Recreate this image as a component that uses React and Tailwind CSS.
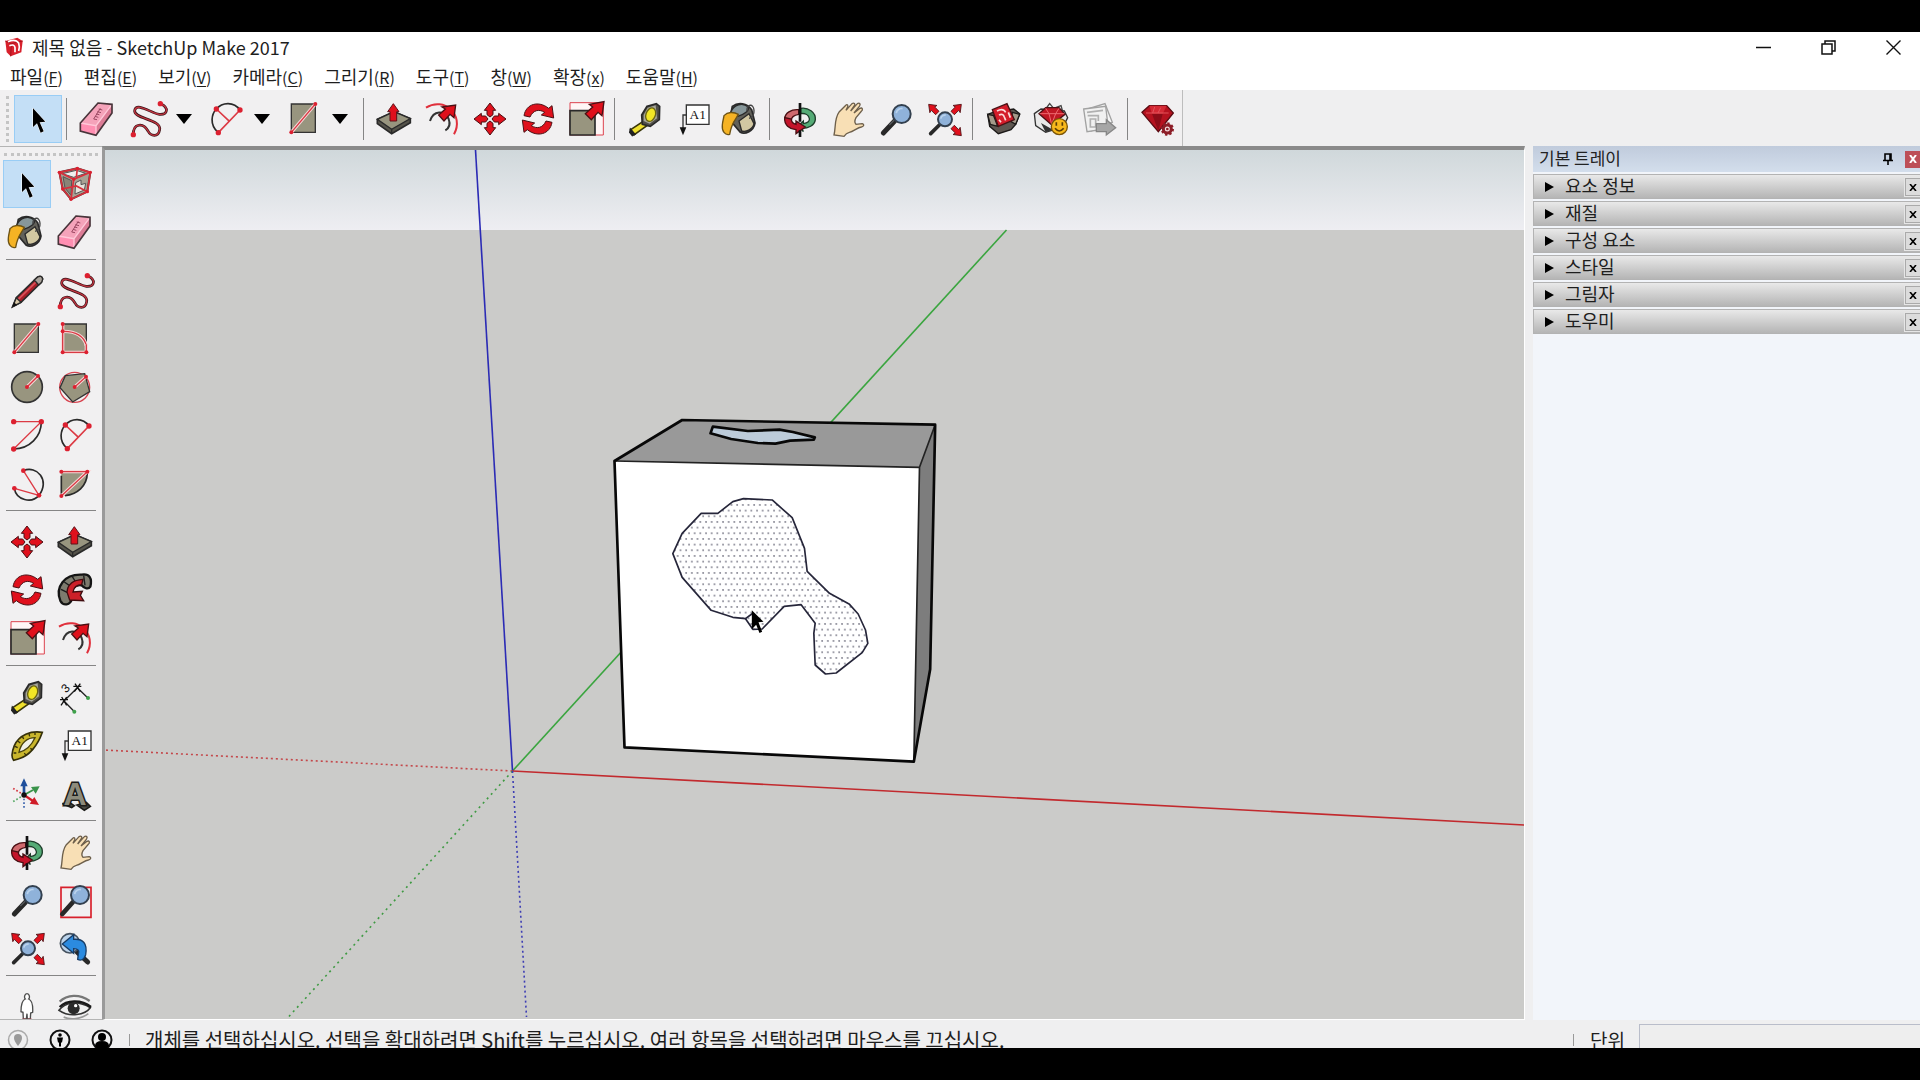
import React, { useState } from "react";

const RED = "#e0101c";
const DARK = "#2a2a2a";
const TAUPE = "#98957f";

// Red end point used by all of the drawing tools
const Dot = ({ x, y, r = 7 }) => <circle cx={x} cy={y} r={r} fill="#dc2030" />;

const RedLine = ({ d }) => (
  <>
    <path d={d} fill="none" stroke="#f8dada" strokeWidth="10" />
    <path d={d} fill="none" stroke="#d83a44" strokeWidth="4" />
  </>
);

const Lens = ({ x, y, r }) => (
  <>
    <circle cx={x} cy={y} r={r} fill="#8fb2da" stroke="#33404f" strokeWidth="6" />
    <path
      d={`M${x - r * 0.6} ${y - r * 0.1}a${r * 0.6} ${r * 0.6} 0 0 1 ${r * 0.7} ${-r * 0.5}`}
      fill="none"
      stroke="#b9d2ec"
      strokeWidth="5"
    />
  </>
);

const Arrow = ({ x, y, angle, s = 1 }) => (
  <path
    d="M0 0L19 25L9 23V46H-9V23L-19 25Z"
    transform={`translate(${x} ${y}) rotate(${angle}) scale(${s})`}
    fill={RED}
    stroke="#4a1014"
    strokeWidth="3"
  />
);

// All icons are drawn on a 120 x 120 grid
const icons = {
  select: (
    <path
      d="M45 28V84L57 73L68 101L77 97L65 70L82 68Z"
      fill="#000"
      stroke="#fff"
      strokeWidth="3"
      paintOrder="stroke"
    />
  ),
  component: (
    <>
      <path d="M13 25L67 13L106 25L97 83L48 106L23 75Z" fill="#a9a294" stroke="#4b3434" strokeWidth="6" />
      <path d="M22 29L64 19L92 28L56 40Z" fill="#efefef" stroke="#555" strokeWidth="3" />
      <path d="M24 38L50 50L48 94L30 72Z" fill="#8a8477" stroke="#555" strokeWidth="3" />
      <path d="M62 56L78 48V62L92 58L88 78L60 90Z" fill="#e8e4dc" stroke="#555" strokeWidth="3" />
      <path
        d="M13 25L67 13L106 25L97 83L48 106L23 75ZM13 25L56 46L106 25M56 46L48 106M67 13L64 40M23 75L64 66L97 83"
        fill="none"
        stroke="#d7303c"
        strokeWidth="5"
      />
      {[[13, 25], [67, 13], [106, 25], [97, 83], [48, 106], [23, 75], [56, 46]].map(([x, y]) => (
        <Dot key={`${x}-${y}`} x={x} y={y} r={5} />
      ))}
    </>
  ),
  paint: (
    <>
      <path d="M34 22C52 8 78 12 92 32L102 72C98 96 72 108 58 100L26 62Z" fill="#62615a" stroke={DARK} strokeWidth="5" />
      <path d="M54 66L84 44L99 74C96 90 76 100 62 96Z" fill="#d2c8a2" stroke={DARK} strokeWidth="4" />
      <path d="M28 42C38 14 66 10 82 24C86 34 70 46 50 52Z" fill="#87979a" stroke={DARK} strokeWidth="4" />
      <path d="M78 38C76 14 98 12 99 34C100 50 92 56 84 58" fill="none" stroke="#444" strokeWidth="4" />
      <path d="M9 50C20 38 38 38 52 46C46 60 32 68 26 106C12 110 2 96 4 78C5 66 8 58 9 50Z" fill="#f5b324" stroke="#6d5315" strokeWidth="4" />
    </>
  ),
  eraser: (
    <>
      <path d="M63 12L105 16L57 80L10 72Z" fill="#f5a3ba" />
      <path d="M105 16V42L57 109V80Z" fill="#dc7c96" />
      <path d="M10 72L57 80V109L10 96Z" fill="#ff8fb2" />
      <path d="M10 72L57 80L105 16M57 80V109" fill="none" stroke="#ffc8d8" strokeWidth="4" />
      <path d="M63 12L105 16V42L57 109L10 96V72Z" fill="none" stroke="#48343a" strokeWidth="5" />
      <path d="M50 60l10 2m-6-10l10 3m-7-10l10 2m-6-9l11 3m-7-11l11 3M50 60L70 28" fill="none" stroke="#9c4963" strokeWidth="3" />
    </>
  ),
  pencil: (
    <>
      <path d="M17 107L28 80L92 18Q104 12 107 24L103 34L42 94Z" fill="#a81f28" stroke={DARK} strokeWidth="5" />
      <path d="M33 86L92 28" stroke="#d9525a" strokeWidth="5" />
      <path d="M17 107L28 80L42 94Z" fill="#d8c8a8" stroke={DARK} strokeWidth="4" />
      <path d="M82 27L92 18Q104 12 107 24L104 34L95 42Z" fill="#a9a29a" stroke={DARK} strokeWidth="4" />
      <path d="M16 108l5-14 9 8z" fill="#111" />
    </>
  ),
  freehand: (
    <>
      <path
        d="M98 14C124 26 119 48 94 46C72 44 26 8 20 34C15 60 101 60 95 92C91 116 68 112 60 96C46 70 15 72 16 107"
        fill="none"
        stroke="#3b1519"
        strokeWidth="8"
      />
      <path
        d="M98 14C124 26 119 48 94 46C72 44 26 8 20 34C15 60 101 60 95 92C91 116 68 112 60 96C46 70 15 72 16 107"
        fill="none"
        stroke="#c03440"
        strokeWidth="4"
      />
      <Dot x={97} y={14} r={8} />
      <Dot x={16} y={107} r={8} />
    </>
  ),
  rectangle: (
    <>
      <path d="M22 15H94V100H22Z" fill={TAUPE} stroke="#333" strokeWidth="4" />
      <RedLine d="M22 100L94 15" />
      <Dot x={22} y={100} r={6} />
      <Dot x={94} y={15} r={6} />
    </>
  ),
  rotatedRect: (
    <>
      <path d="M23 15H94V100H23Z" fill={TAUPE} stroke="#333" strokeWidth="4" />
      <RedLine d="M23 37C62 36 88 52 94 80" />
      <RedLine d="M23 15V100H94V76" />
      <Dot x={23} y={15} r={6} />
      <Dot x={23} y={37} r={6} />
      <Dot x={23} y={100} r={6} />
      <Dot x={94} y={100} r={6} />
    </>
  ),
  circle: (
    <>
      <circle cx="60" cy="60" r="46" fill={TAUPE} stroke="#333" strokeWidth="5" />
      <RedLine d="M60 60L93 27" />
      <Dot x={60} y={60} r={6} />
      <Dot x={93} y={27} r={6} />
    </>
  ),
  polygon: (
    <>
      <circle cx="59" cy="61" r="45" fill="none" stroke="#d84450" strokeWidth="4" />
      <path d="M31 26L89 20L104 74L53 105L15 62Z" fill={TAUPE} stroke="#333" strokeWidth="4" />
      <RedLine d="M59 60L93 29" />
      <Dot x={59} y={60} r={6} />
      <Dot x={93} y={29} r={6} />
    </>
  ),
  arc: (
    <>
      <path d="M103 20C103 65 68 101 20 102" fill="none" stroke={DARK} strokeWidth="5" />
      <path d="M20 20H103L20 102" fill="none" stroke="#dc3a44" strokeWidth="4" />
      <Dot x={20} y={20} r={8} />
      <Dot x={103} y={20} r={8} />
      <Dot x={20} y={102} r={8} />
    </>
  ),
  arc2: (
    <>
      <path d="M37 101C8 76 18 44 31 30C48 10 83 6 102 33" fill="none" stroke={DARK} strokeWidth="5" />
      <path d="M102 33L37 101M31 30L68 65" fill="none" stroke="#dc3a44" strokeWidth="5" />
      <Dot x={31} y={30} r={8} />
      <Dot x={102} y={33} r={8} />
      <Dot x={37} y={101} r={8} />
    </>
  ),
  arc3: (
    <>
      <path d="M49 23C90 6 130 52 96 97C74 122 28 112 22 76" fill="none" stroke={DARK} strokeWidth="5" />
      <path d="M49 23L96 97L22 76" fill="none" stroke="#dc3a44" strokeWidth="4" />
      <Dot x={49} y={23} />
      <Dot x={22} y={76} />
      <Dot x={96} y={97} />
    </>
  ),
  pie: (
    <>
      <path d="M19 30H97C96 72 64 97 19 99Z" fill={TAUPE} />
      <path d="M97 30C96 70 66 94 30 98M19 38V92" fill="none" stroke={DARK} strokeWidth="5" />
      <RedLine d="M19 26H97L19 99" />
      <Dot x={19} y={26} r={6} />
      <Dot x={97} y={26} r={6} />
      <Dot x={19} y={99} r={6} />
    </>
  ),
  move: (
    <>
      {[0, 90, 180, 270].map((a) => (
        <path
          key={a}
          d="M60 12L77 34H69V47L60 54L51 47V34H43Z"
          transform={`rotate(${a} 60 60)`}
          fill={RED}
          stroke="#4a1014"
          strokeWidth="3"
        />
      ))}
    </>
  ),
  pushPull: (
    <>
      <path d="M10 61L60 38L109 59V71L53 104L10 74Z" fill="#55534a" stroke={DARK} strokeWidth="5" />
      <path d="M10 61L60 38L109 59L53 91Z" fill={TAUPE} stroke={DARK} strokeWidth="4" />
      <path d="M53 91V104" stroke={DARK} strokeWidth="4" />
      <path d="M58 14L75 38H68V66H48V38H41Z" fill={RED} stroke="#5c1218" strokeWidth="3" />
    </>
  ),
  rotate: (
    <>
      <path d="M18 50C24 14 62 4 92 28L102 20L107 57L70 48L80 40C64 30 46 32 36 54Z" fill={RED} stroke="#4a1014" strokeWidth="3" />
      <path d="M102 70C96 106 58 116 28 92L18 100L13 63L50 72L40 80C56 90 74 88 84 66Z" fill={RED} stroke="#4a1014" strokeWidth="3" />
    </>
  ),
  followMe: (
    <>
      <path d="M16 92C0 50 28 12 80 14C104 10 112 26 106 50C98 62 84 50 80 46C58 42 46 60 52 84C46 108 24 108 16 92Z" fill="#7d7b6e" stroke="#141414" strokeWidth="7" />
      <path d="M18 58L38 68M28 36L48 50M52 20L62 36M86 16L90 46" stroke="#1c1c1c" strokeWidth="4" />
      <path d="M36 66C38 42 52 30 84 28L80 44C64 44 56 54 54 66L82 64L76 76L86 92L44 90Z" fill="#cc2029" stroke="#3f0d10" strokeWidth="4" />
    </>
  ),
  scale: (
    <>
      <path d="M12 11H112V108H12Z" fill="#fff6f6" stroke="#dc4450" strokeWidth="3" />
      <path d="M12 35H87V108H12Z" fill={TAUPE} stroke={DARK} strokeWidth="5" />
      <path d="M114 8L108 50L96 40L76 62L58 44L80 24L70 16Z" fill={RED} stroke="#4a1014" strokeWidth="4" />
    </>
  ),
  offset: (
    <>
      <path d="M12 26C66 -8 128 48 96 106" fill="none" stroke="#e0303c" strokeWidth="6" />
      <path d="M24 66C34 34 68 32 80 60C86 76 80 88 70 94" fill="none" stroke="#333" strokeWidth="6" />
      <path d="M101 18L96 56L84 46L66 66L50 48L70 30L60 24Z" fill={RED} stroke="#4a1014" strokeWidth="4" />
    </>
  ),
  tape: (
    <>
      <path d="M56 66L67 79L28 107L17 92Z" fill="#efe02d" stroke="#3a3608" strokeWidth="5" />
      <path d="M16 90L30 106L22 110L14 100Z" fill="#222" stroke="#222" strokeWidth="4" />
      <path d="M66 22L94 14L104 22L103 62L76 82L52 76L50 48Z" fill="#514f48" stroke={DARK} strokeWidth="5" />
      <path d="M68 26L92 19L96 58L74 74L56 66V48Z" fill="#a7a69c" />
      <ellipse cx="77" cy="47" rx="14" ry="21" transform="rotate(20 77 47)" fill="#f1e526" stroke="#6a6410" strokeWidth="4" />
    </>
  ),
  dimension: (
    <>
      <path d="M24 75L70 29M67 32L98 62M27 72L57 103" stroke="#222" strokeWidth="4" />
      <path d="M55 28H79M60 20L76 44M76 20L58 44M15 68H39M20 60L35 85M35 60L18 85" stroke="#111" strokeWidth="4" />
      <circle cx="99" cy="63" r="6" fill="#3fa14b" />
      <circle cx="58" cy="104" r="6" fill="#3fa14b" />
      <text x="32" y="46" transform="rotate(-45 32 34)" textAnchor="middle" className="font-['Liberation_Sans'] text-[36px]" fill="#111">
        3
      </text>
    </>
  ),
  protractor: (
    <>
      <path d="M106 22C72 16 36 30 22 62C14 82 13 98 20 106L34 102C66 94 92 62 106 22Z" fill="#c9b62c" stroke="#35300a" strokeWidth="5" />
      <path d="M84 38C62 38 42 52 36 82C58 76 74 60 84 38Z" fill="#f1f1e8" stroke="#4a430c" strokeWidth="4" />
      <path d="M24 64L32 68M32 48L40 54M46 34L50 42M66 26L68 34M20 84L28 84M84 24L84 30M52 84L56 90M70 70L76 74" stroke="#35300a" strokeWidth="4" />
    </>
  ),
  text: (
    <>
      <path d="M40 18H108V76H40Z" fill="#fff" stroke="#333" strokeWidth="4" />
      <path d="M40 48H30V88" fill="none" stroke="#333" strokeWidth="4" />
      <path d="M20 85H40L30 109Z" fill="#111" />
      <text x="74" y="60" textAnchor="middle" className="font-['Liberation_Serif'] text-[40px]" fill="#111">
        A1
      </text>
    </>
  ),
  axes: (
    <>
      <path d="M51 66V36" stroke="#1f4f9c" strokeWidth="8" />
      <path d="M51 16L62 40H40Z" fill="#1f4f9c" />
      <path d="M51 66L78 51" stroke="#39934a" strokeWidth="6" />
      <path d="M98 40L86 62L72 42Z" fill="#39934a" />
      <path d="M51 66L78 84" stroke="#d01c28" strokeWidth="7" />
      <path d="M96 96L68 92L82 72Z" fill="#d01c28" />
      <path d="M51 66V104" stroke="#3b63ad" strokeWidth="5" strokeDasharray="5 6" />
      <path d="M51 66L18 46" stroke="#d43a44" strokeWidth="5" strokeDasharray="5 6" />
      <path d="M51 66L18 86" stroke="#56a965" strokeWidth="5" strokeDasharray="5 6" />
      <circle cx="51" cy="66" r="8" fill="#111" />
    </>
  ),
  // Solid letter: a slab base with the glyph standing on it
  text3d: (
    <>
      <path d="M22 92L50 104L58 98L46 90ZM66 96L88 112L106 100L94 88Z" fill="#4c4b43" stroke="#1c1c1a" strokeWidth="5" />
      <text
        x="60"
        y="95"
        textAnchor="middle"
        className="font-['Liberation_Sans'] text-[96px] font-bold"
        fill="#8d8b7c"
        stroke="#1c1c1a"
        strokeWidth="9"
        paintOrder="stroke"
      >
        A
      </text>
    </>
  ),
  orbit: (
    <>
      <path d="M62 28C84 24 108 40 106 62C104 80 84 88 66 88L70 98L56 80L70 66V74C84 72 90 66 88 58C86 48 76 42 62 44Z" fill="#55ab76" stroke="#1d3d2a" strokeWidth="4" />
      <path d="M56 32C34 30 14 42 14 60L34 64C34 54 44 48 56 46Z" fill="#cf6a6e" stroke="#4a1014" strokeWidth="4" />
      <path d="M14 56C12 78 28 90 48 92V104L76 84L48 66V76C38 74 34 68 34 60Z" fill="#c4142a" stroke="#4a1014" strokeWidth="4" />
      <path d="M60 12V68M60 94V114" stroke="#111" strokeWidth="8" />
    </>
  ),
  hand: (
    <path
      d="M18 108C24 84 18 60 34 38L52 20C58 14 62 18 58 26L54 34L72 14C78 10 83 14 79 20L68 36L88 14C95 10 99 16 94 22L78 42L96 28C103 24 106 32 100 37L84 56C80 64 80 72 84 76L102 74C110 76 108 82 100 84C88 86 76 98 64 100C56 102 52 106 48 112Z"
      fill="#f8dfb5"
      stroke="#6d5f4b"
      strokeWidth="4"
    />
  ),
  zoom: (
    <>
      <path d="M56 66L22 102" stroke="#282828" strokeWidth="15" strokeLinecap="round" />
      <path d="M54 64L40 78" stroke="#55585c" strokeWidth="4" />
      <Lens x={77} y={45} r={27} />
    </>
  ),
  zoomWindow: (
    <>
      <path d="M18 22H108V112H18Z" fill="none" stroke="#d8202c" strokeWidth="5" />
      <path d="M54 66L22 102" stroke="#282828" strokeWidth="14" strokeLinecap="round" />
      <Lens x={75} y={45} r={27} />
    </>
  ),
  extents: (
    <>
      <path d="M46 78L20 104" stroke="#282828" strokeWidth="11" strokeLinecap="round" />
      <Lens x={63} y={61} r={21} />
      <Arrow x={14} y={16} angle={-45} s={0.8} />
      <Arrow x={112} y={16} angle={45} s={0.8} />
      <Arrow x={112} y={110} angle={135} s={0.8} />
    </>
  ),
  previous: (
    <>
      <path d="M66 72L98 102" stroke="#282828" strokeWidth="15" strokeLinecap="round" />
      <circle cx="45" cy="46" r="29" fill="#bcd3ea" stroke="#46525f" strokeWidth="5" />
      <path d="M22 48L56 20V34C84 32 98 46 92 80C86 98 76 98 68 94L70 78C74 68 70 62 56 62V76Z" fill="#2b8be0" stroke="#173c66" strokeWidth="4" />
    </>
  ),
  person: (
    <>
      <path
        d="M60 20C68 20 69 32 65 36C75 40 78 58 77 76L71 78L70 96H61L60 80L58 96H49L48 76L42 74C42 56 45 40 55 36C51 32 52 20 60 20Z"
        fill="#fff"
        stroke="#4c4c4c"
        strokeWidth="4"
      />
      <path d="M46 97H56M62 97H74" stroke="#a84850" strokeWidth="5" />
    </>
  ),
  eye: (
    <>
      <path d="M14 44C36 22 74 20 104 42" fill="none" stroke="#777" strokeWidth="7" />
      <path d="M12 70C28 48 66 38 106 62C90 84 44 92 12 70Z" fill="#f0f0f0" stroke="#333" strokeWidth="5" />
      <path d="M14 60C34 40 78 36 108 60" fill="none" stroke="#1a1a1a" strokeWidth="7" />
      <circle cx="56" cy="64" r="18" fill="#2a2a2a" />
      <circle cx="62" cy="56" r="5" fill="#fff" />
      <path d="M26 90C46 100 80 96 100 80" fill="none" stroke="#999" strokeWidth="5" />
    </>
  ),
  warehouse: (
    <>
      <path d="M14 46L30 40L92 30L110 44L98 76L84 92L46 104L20 82Z" fill="#5d5650" stroke="#1c1a19" strokeWidth="4" />
      <path d="M14 46L32 50L44 82L22 76ZM88 40L110 46L98 76L84 68Z" fill="#a49a8a" stroke="#1c1a19" strokeWidth="4" />
      <path d="M28 32L72 14L94 62L46 82Z" fill="#d41c2a" stroke="#4a1014" strokeWidth="4" />
      <path d="M42 36Q60 26 68 40M48 48Q60 42 64 54L68 64M76 40L82 56M48 62L54 70" fill="none" stroke="#fbdcdc" strokeWidth="5" />
    </>
  ),
  extensions: (
    <>
      <path d="M10 44L30 30L100 36L110 56L96 84L44 100L14 80Z" fill="#e9e9e9" stroke="#333" strokeWidth="4" />
      <path d="M30 72L44 100L66 92Z" fill="#333" />
      <path d="M44 30L56 14L68 28L90 20L94 34Z" fill="#f4f4f4" stroke="#444" strokeWidth="4" />
      <path d="M24 44L44 26L84 26L102 46L62 78Z" fill="#c01824" stroke="#4a1014" strokeWidth="4" />
      <path d="M26 44H100M44 28L54 44L62 76L74 44L84 28" fill="none" stroke="#ee6a70" strokeWidth="3" />
      <circle cx="85" cy="83" r="24" fill="#f7b81c" stroke="#7a5407" strokeWidth="4" />
      <path d="M76 70V80M94 70V80M72 88Q85 104 98 88" fill="none" stroke="#5a3d05" strokeWidth="5" />
    </>
  ),
  layout: (
    <>
      <path d="M26 30L78 14L100 70L36 96Z" fill="#f6f6f6" stroke="#a2a2a2" strokeWidth="4" />
      <path d="M14 30L80 22L88 88L24 98Z" fill="#f1f1f1" stroke="#a2a2a2" strokeWidth="4" />
      <path d="M24 40L72 34M26 50H58V66M34 60H50V84H34Z" fill="none" stroke="#b0b0b0" strokeWidth="5" />
      <path d="M52 74H82V62L110 86L82 108V98H52Z" fill="#a6a6a6" stroke="#868686" strokeWidth="4" />
    </>
  ),
  ruby: (
    <>
      <path d="M12 40L34 20L86 20L106 42L61 98Z" fill="#b5121f" stroke="#5a0b12" strokeWidth="4" />
      <path d="M34 20L86 20L74 44H42Z" fill="#d42a35" />
      <path d="M42 44H74L61 96Z" fill="#8c0c17" />
      <path d="M24 42H92M50 24L44 42M60 42L68 26" fill="none" stroke="#e2525b" strokeWidth="3" />
      <circle cx="88" cy="90" r="12" fill="#f2dede" stroke="#8d1e28" strokeWidth="9" />
      <circle cx="88" cy="90" r="17" fill="none" stroke="#8d1e28" strokeWidth="6" strokeDasharray="7 6" />
      <circle cx="88" cy="90" r="4" fill="#8d1e28" />
    </>
  ),
};

const menus = [
  { label: "파일", hotkey: "F" },
  { label: "편집", hotkey: "E" },
  { label: "보기", hotkey: "V" },
  { label: "카메라", hotkey: "C" },
  { label: "그리기", hotkey: "R" },
  { label: "도구", hotkey: "T" },
  { label: "창", hotkey: "W" },
  { label: "확장", hotkey: "x" },
  { label: "도움말", hotkey: "H" },
];

const topTools = [
  ["pushPull", "offset", "move", "rotate", "scale"],
  ["tape", "text", "paint"],
  ["orbit", "hand", "zoom", "extents"],
  ["warehouse", "extensions", "layout"],
  ["ruby"],
];

const sideTools = [
  ["select", "component", "paint", "eraser"],
  ["pencil", "freehand", "rectangle", "rotatedRect", "circle", "polygon", "arc", "arc2", "arc3", "pie"],
  ["move", "pushPull", "rotate", "followMe", "scale", "offset"],
  ["tape", "dimension", "protractor", "text", "axes", "text3d"],
  ["orbit", "hand", "zoom", "zoomWindow", "extents", "previous"],
  ["person", "eye"],
];

const trayPanels = ["요소 정보", "재질", "구성 요소", "스타일", "그림자", "도우미"];

function ToolButton({ name, active, onClick }) {
  return (
    <button
      type="button"
      aria-label={name}
      onClick={onClick}
      className={`flex h-12 w-12 shrink-0 items-center justify-center border ${
        active ? "border-[#99cdf5] bg-[#c4dff6]" : "border-transparent"
      }`}
    >
      <svg viewBox="0 0 120 120" className="h-10 w-10 overflow-visible" aria-hidden="true">
        {icons[name]}
      </svg>
    </button>
  );
}

function SplitTool({ name, onClick }) {
  return (
    <div className="flex items-center">
      <ToolButton name={name} onClick={onClick} />
      <button type="button" aria-label={`${name} menu`} className="flex h-12 w-[27px] items-center justify-start pl-1">
        <svg viewBox="0 0 16 10" className="h-[10px] w-4">
          <path d="M0 0H16L8 10Z" fill="#000" />
        </svg>
      </button>
    </div>
  );
}

const Divider = () => <div className="mr-1.5 ml-1 h-[42px] w-px shrink-0 bg-[#858585]" />;

function Scene() {
  return (
    <svg
      viewBox="105 150 1420 869"
      preserveAspectRatio="xMidYMid slice"
      className="absolute inset-0 h-full w-full"
      role="img"
      aria-label="Model view"
    >
      <defs>
        <linearGradient id="sky" x1="0" y1="0" x2="0" y2="1">
          <stop offset="0" stopColor="#d0d8db" />
          <stop offset="1" stopColor="#eeeef2" />
        </linearGradient>
        <pattern id="selected" x="487" y="312" width="17" height="34" patternUnits="userSpaceOnUse">
          <circle cx="3" cy="3" r="2.2" fill="#14142c" />
          <circle cx="11.5" cy="20" r="2.2" fill="#14142c" />
        </pattern>
      </defs>
      <rect x="105" y="150" width="1420" height="80" fill="url(#sky)" />
      <rect x="105" y="230" width="1420" height="789" fill="#cbcbc9" />

      {/* Axes */}
      <g fill="none" strokeWidth="1.6">
        <path d="M513 771L1007 230" stroke="#3aa53f" />
        <path d="M476 150L513 771" stroke="#2b2bb5" />
        <path d="M513 771L1525 825" stroke="#c22a2e" />
        <path d="M513 771L105 750" stroke="#c4484b" strokeDasharray="2 3" />
        <path d="M513 771L289 1017" stroke="#3f9a43" strokeDasharray="2 4" />
        <path d="M513 771L527 1017" stroke="#3d3db4" strokeDasharray="2 3" />
      </g>

      {/* Box */}
      <g transform="translate(580 400) scale(.33333)" strokeLinejoin="round" strokeLinecap="round">
        <path d="M105 183L308 60L1067 74L1020 202Z" fill="#999" />
        <path d="M1020 202L1067 74L1052 808L1003 1085Z" fill="#7d7d7d" />
        <path d="M105 183L1020 202L1003 1085L135 1042Z" fill="#fff" />
        <path d="M105 183L1020 202L1003 1085M1020 202L1067 74" fill="none" stroke="#222" strokeWidth="5" />
        <path d="M105 183L308 60L1067 74L1052 808L1003 1085L135 1042Z" fill="none" stroke="#080808" strokeWidth="8" />
        <path d="M400 80L505 93L600 89L640 96L706 112L703 119L632 122L588 131L535 129L455 117L393 100Z" fill="#bccbd9" stroke="#080808" strokeWidth="8" />
        <path
          d="M280 461L308 400L365 340H415L460 305L492 296L578 300L638 353L675 445L683 514L750 580L810 613L836 642L858 690L865 730L848 758L770 819L738 822L707 795L703 700L707 670L665 614L614 619L548 687L520 688L498 656L460 652L395 631L308 532Z"
          fill="url(#selected)"
          stroke="#26263a"
          strokeWidth="5"
        />
        <path d="M498 656L517 642" stroke="#26263a" strokeWidth="5" />
        <path d="M517 631V688L530 674L540 699L548 695L537 667L552 665Z" fill="#000" />
      </g>
    </svg>
  );
}

function Tray() {
  return (
    <aside className="ml-2 flex w-[387px] shrink-0 flex-col bg-[#f2f5fa]">
      <header className="flex h-[26px] items-center justify-between bg-linear-to-b from-[#c0cbdc] to-[#d3deec] pl-1.5">
        <h2 className="pb-0.5 text-[17px] leading-6 text-[#222]">기본 트레이</h2>
        <div className="flex items-center gap-3">
          <button type="button" aria-label="Pin">
            <svg viewBox="0 0 10 12" className="h-3 w-[10px]">
              <path d="M2 7V1H8V7M0 7.5H10M5 8V12M7 1V7" fill="none" stroke="#000" strokeWidth="1.6" />
            </svg>
          </button>
          <button
            type="button"
            aria-label="Close tray"
            className="flex h-[17px] w-[15px] items-center justify-center bg-[#bd4f57] text-white"
          >
            <svg viewBox="0 0 8 8" className="h-2 w-2">
              <path d="M1 0L7 8M7 0L1 8" stroke="currentColor" strokeWidth="2" />
            </svg>
          </button>
        </div>
      </header>
      <ul className="mt-0.5 flex flex-col gap-0.5">
        {trayPanels.map((title) => (
          <li
            key={title}
            className="flex h-[25px] items-center justify-between border border-r-0 border-[#b3b3b3] bg-linear-to-b from-[#e9e9e9] to-[#b5b5b5]"
          >
            <button type="button" className="flex items-center gap-[11px] pl-[11px] text-[18px] leading-[22px]">
              <svg viewBox="0 0 9 10" className="h-[10px] w-[9px]">
                <path d="M0 0L9 5L0 10Z" fill="#000" />
              </svg>
              <span className="pb-[3px]">{title}</span>
            </button>
            <button
              type="button"
              aria-label={`${title} close`}
              className="flex h-[18px] w-[15px] items-center justify-center border border-r-0 border-[#aaa] bg-[#dcdcdc] pt-0.5 outline outline-[#e6e6e6]"
            >
              <svg viewBox="0 0 8 7" className="h-[7px] w-2">
                <path d="M1 0L7 7M7 0L1 7" stroke="#000" strokeWidth="1.6" />
              </svg>
            </button>
          </li>
        ))}
      </ul>
    </aside>
  );
}

function StatusBar() {
  return (
    <footer className="h-7 shrink-0 overflow-hidden">
      <div className="flex h-10 items-center">
        <div className="flex items-center gap-5 pl-[7px]">
          <button type="button" aria-label="Location">
            <svg viewBox="0 0 22 22" className="h-[22px] w-[22px]">
              <circle cx="11" cy="11" r="9.5" fill="none" stroke="#aaa" strokeWidth="1.5" />
              <path d="M11 5a4 4 0 0 1 4 4q0 3-4 8q-4-5-4-8a4 4 0 0 1 4-4" fill="#999" />
            </svg>
          </button>
          <button type="button" aria-label="Credits">
            <svg viewBox="0 0 22 22" className="h-[22px] w-[22px]">
              <circle cx="11" cy="11" r="9.5" fill="none" stroke="#111" strokeWidth="2" />
              <circle cx="11" cy="6" r="1.8" />
              <path d="M8 8.500h6l-1 5h-1v4h-2v-4H9z" />
            </svg>
          </button>
          <button type="button" aria-label="Account">
            <svg viewBox="0 0 22 22" className="h-[22px] w-[22px]">
              <circle cx="11" cy="11" r="9.500" fill="none" stroke="#111" strokeWidth="2" />
              <circle cx="11" cy="8" r="4" />
              <path d="M4 17q0-5 7-5t7 5q-3 4-7 4t-7-4" />
            </svg>
          </button>
        </div>
        <div className="ml-4 h-3 w-px bg-[#999]" />
        <p className="ml-[15px] flex-1 text-[20px] whitespace-nowrap">
          개체를 선택하십시오. 선택을 확대하려면 Shift를 누르십시오. 여러 항목을 선택하려면 마우스를 끄십시오.
        </p>
        <div className="mr-4 h-3 w-px bg-[#999]" />
        <label htmlFor="measure" className="mr-3.5 text-[19px]">
          단위
        </label>
        <input
          id="measure"
          className="mt-2 h-10 w-[281px] border border-r-0 border-[#b9bdca] bg-[#eee] px-2 outline-none"
        />
      </div>
    </footer>
  );
}

export default function App() {
  const [tool, setTool] = useState("select");

  return (
    <div className="flex h-screen flex-col bg-black py-8 font-['Noto_Sans_CJK_KR',sans-serif] text-[#1e1e1e]">
      <div className="flex min-h-0 flex-1 flex-col bg-[#efeff0]">
        {/* Title bar */}
        <header className="flex h-8 shrink-0 items-center justify-between bg-white pr-[19px] pb-0.5 pl-1">
          <div className="flex items-center gap-2">
            <svg viewBox="0 0 60 60" className="h-5 w-5">
              <path d="M4 12L40 2L56 12L52 46L20 58L8 46Z" fill="#d8202c" />
              <path d="M4 12L22 20L56 12M22 20L20 58" fill="none" stroke="#a8121c" strokeWidth="3" />
              <path d="M12 14Q34 4 44 18Q48 30 44 42M16 26Q32 20 33 32V46" fill="none" stroke="#fff" strokeWidth="5" />
            </svg>
            <h1 className="text-[18px]">제목 없음 - SketchUp Make 2017</h1>
          </div>
          <div className="flex items-center gap-[50px]">
            <button type="button" aria-label="Minimize">
              <svg viewBox="0 0 15 15" className="h-[15px] w-[15px]">
                <path d="M0 7.500H15" stroke="#111" strokeWidth="1.500" />
              </svg>
            </button>
            <button type="button" aria-label="Restore">
              <svg viewBox="0 0 15 15" className="h-[15px] w-[15px]">
                <path d="M1 4H11V14H1ZM4 4V1H14V11H11" fill="none" stroke="#111" strokeWidth="1.500" />
              </svg>
            </button>
            <button type="button" aria-label="Close">
              <svg viewBox="0 0 15 15" className="h-[15px] w-[15px]">
                <path d="M0.500 0.500L14.500 14.500M14.500 0.500L0.500 14.500" stroke="#111" strokeWidth="1.400" />
              </svg>
            </button>
          </div>
        </header>

        {/* Menu bar */}
        <nav className="flex h-[26px] shrink-0 items-center gap-[21px] bg-white pb-0.5 pl-[10px] text-[18px] leading-6">
          {menus.map((m) => (
            <button key={m.label} type="button">
              {m.label}
              <span className="text-[16px]">
                (<u className="underline-offset-2">{m.hotkey}</u>)
              </span>
            </button>
          ))}
        </nav>

        {/* Toolbar */}
        <div className="flex h-14 shrink-0">
          <div className="flex items-center border-r border-[#bdbdbd] bg-[#f1f0f1] pt-0.5 pl-1.5">
            <div className="mr-[5px] h-[46px] w-[3px] border-l-3 border-dotted border-[#c4c4c4]" />
            <ToolButton name="select" active={tool === "select"} onClick={() => setTool("select")} />
            <Divider />
            <div className="flex gap-[3px] pr-1">
              <ToolButton name="eraser" active={tool === "eraser"} onClick={() => setTool("eraser")} />
              <SplitTool name="freehand" onClick={() => setTool("freehand")} />
              <SplitTool name="arc2" onClick={() => setTool("arc2")} />
              <SplitTool name="rectangle" onClick={() => setTool("rectangle")} />
            </div>
            {topTools.map((group) => (
              <React.Fragment key={group[0]}>
                <Divider />
                {group.map((name) => (
                  <ToolButton key={name} name={name} active={tool === name} onClick={() => setTool(name)} />
                ))}
              </React.Fragment>
            ))}
          </div>
        </div>

        <main className="flex min-h-0 flex-1">
          {/* Large tool set */}
          <div className="w-[102px] shrink-0 overflow-hidden border-t border-b border-t-[#b4b4b4] border-b-[#b4b4b4] bg-[#f1f0f1] px-[3px]">
            <div className="mx-px mt-1.5 mb-1 h-[3px] border-t-3 border-dotted border-[#c4c4c4]" />
            {sideTools.map((group, i) => (
              <div key={group[0]}>
                {i > 0 && <div className="mx-[3px] mt-[3px] mb-[7px] h-px bg-[#858585]" />}
                <div className="grid grid-cols-2">
                  {group.map((name) => (
                    <ToolButton key={name} name={name} active={tool === name} onClick={() => setTool(name)} />
                  ))}
                </div>
              </div>
            ))}
          </div>

          <section className="relative flex-1 border-t-4 border-r border-b border-l-3 border-t-[#8a8a8a] border-r-white border-b-white border-l-[#9a9a9a]">
            <Scene />
          </section>

          <Tray />
        </main>

        <StatusBar />
      </div>
    </div>
  );
}
